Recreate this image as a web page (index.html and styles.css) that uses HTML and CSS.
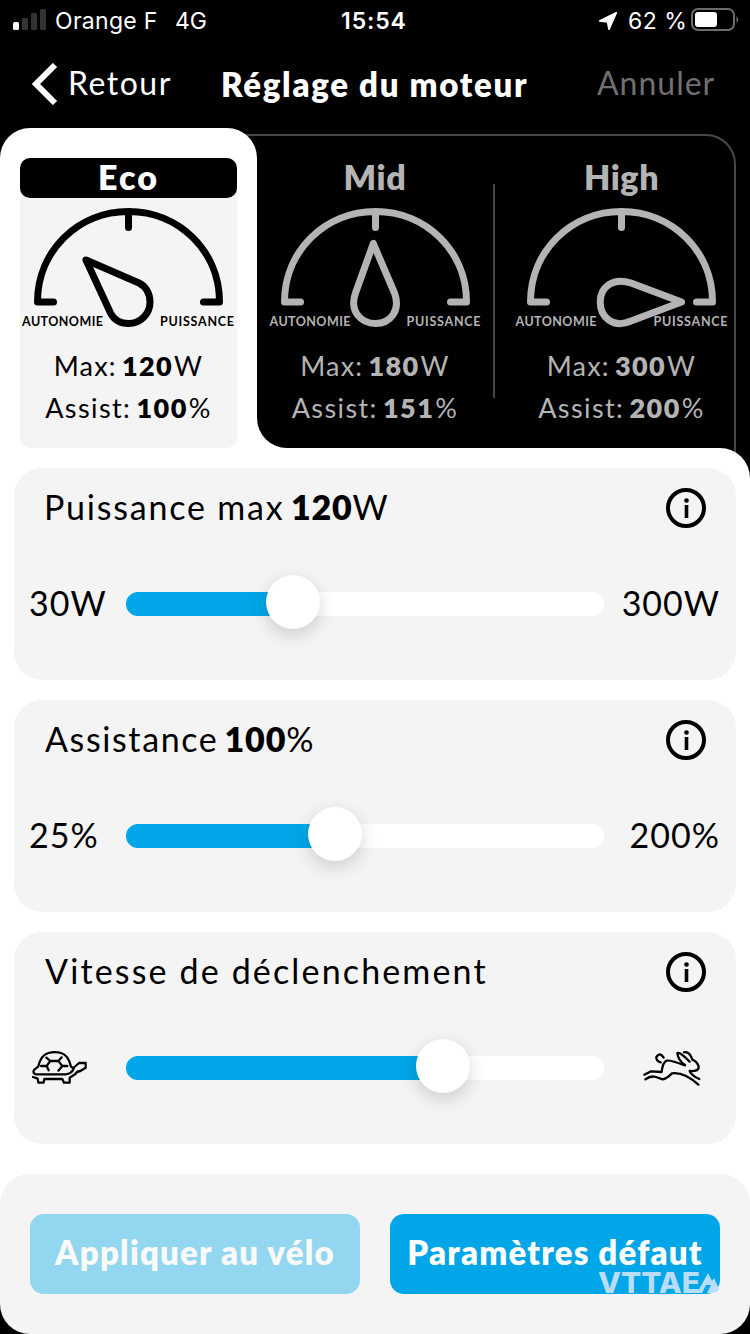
FILE: index.html
```html
<!DOCTYPE html>
<html lang="fr">
<head>
<meta charset="UTF-8">
<meta name="viewport" content="width=device-width, initial-scale=1.0">
<title>Réglage du moteur</title>
<link rel="stylesheet" href="styles.css">
</head>
<body>

<div class="status-bar">
  <svg class="signal" width="34" height="22" viewBox="0 0 34 22">
    <rect x="0" y="13" width="6" height="8" rx="1.5" fill="#fff"/>
    <rect x="9" y="9" width="6" height="12" rx="1.5" fill="#333"/>
    <rect x="18" y="4" width="6" height="17" rx="1.5" fill="#333"/>
    <rect x="27" y="0" width="6" height="21" rx="1.5" fill="#333"/>
  </svg>
  <span class="carrier">Orange F</span>
  <span class="network">4G</span>
  <span class="clock">15:54</span>
  <svg class="location" width="18" height="18" viewBox="0 0 18 18"><path d="M17.500 0.500L10 17.500L8.500 10L0.500 9Z" fill="#fff" stroke="#fff" stroke-width="1.500" stroke-linejoin="round"/></svg>
  <span class="percent">62 %</span>
  <svg class="battery" width="48" height="24" viewBox="0 0 48 24">
    <rect x="1" y="1" width="42" height="21" rx="6" fill="none" stroke="#6b6b6b" stroke-width="2"/>
    <rect x="4" y="4" width="22" height="15" rx="3" fill="#fff"/>
    <path d="M45.500 8Q49 11.500 45.500 15Z" fill="#6b6b6b"/>
  </svg>
</div>

<div class="nav">
  <svg class="chevron" width="26" height="42" viewBox="0 0 26 42"><path d="M23 2L4 21L23 40" fill="none" stroke="#fff" stroke-width="6"/></svg>
  <span class="back">Retour</span>
  <h1>Réglage du moteur</h1>
  <span class="cancel">Annuler</span>
</div>

<div class="modes">
  <div class="modes-dark"></div>
  <div class="modes-frame"></div>
  <div class="mode-tab"></div>
  <div class="mode active">
    <h2>Eco</h2>
    <svg class="gauge" width="217" height="136" viewBox="0 0 217 136">
      <path class="line" d="M33.500 104H17.500C17.500 53 58 13.500 108.500 13.500S199.500 53 199.500 104H183.500M108.500 14V29.500"/>
      <path class="line" d="M66 62L119 85C126 88.500 130 96 130 104A21.500 21.500 0 0 1 108.500 125.500C101 125.500 94 122 90.500 115Z"/>
      <text x="2" y="128" textLength="81">AUTONOMIE</text>
      <text x="140" y="128" textLength="74">PUISSANCE</text>
    </svg>
    <p class="max">Max: <b>120</b>W</p>
    <p class="assist">Assist: <b>100</b>%</p>
  </div>
  <div class="mode divided">
    <h2>Mid</h2>
    <svg class="gauge" width="217" height="136" viewBox="0 0 217 136">
      <path class="line" d="M33.500 104H17.500C17.500 53 58 13.500 108.500 13.500S199.500 53 199.500 104H183.500M108.500 14V29.500"/>
      <path class="line" d="M106.300 45.500L88.500 95C82 113 94 125.500 108.500 125.500S134 113 127.500 95Z"/>
      <text x="2.500" y="128" textLength="81">AUTONOMIE</text>
      <text x="139.500" y="128" textLength="74">PUISSANCE</text>
    </svg>
    <p class="max">Max: <b>180</b>W</p>
    <p class="assist">Assist: <b>151</b>%</p>
  </div>
  <div class="mode">
    <h2>High</h2>
    <svg class="gauge" width="217" height="136" viewBox="0 0 217 136">
      <path class="line" d="M33.500 104H17.500C17.500 53 58 13.500 108.500 13.500S199.500 53 199.500 104H183.500M108.500 14V29.500"/>
      <path class="line" d="M168.500 104L118 85C100 79 87.200 89 87.200 104S100 131 118 123Z"/>
      <text x="2.500" y="128" textLength="81">AUTONOMIE</text>
      <text x="140.500" y="128" textLength="74">PUISSANCE</text>
    </svg>
    <p class="max">Max: <b>300</b>W</p>
    <p class="assist">Assist: <b>200</b>%</p>
  </div>
</div>

<div class="sheet">
  <div class="card">
    <div class="card-head">
      <h3 class="power">Puissance max <b>120</b>W</h3>
      <svg class="info" width="40" height="40" viewBox="0 0 40 40"><circle cx="20" cy="20" r="18" fill="none" stroke="#000" stroke-width="4"/><circle cx="20.500" cy="12.500" r="2.300"/><path d="M18.700 17H22.300V30H18.700Z"/></svg>
    </div>
    <div class="slider-row">
      <span class="low">30W</span>
      <div class="track"><div class="fill" style="width: 167px"><div class="thumb"></div></div></div>
      <span class="high">300W</span>
    </div>
  </div>

  <div class="card">
    <div class="card-head">
      <h3 class="assistance">Assistance <b>100</b>%</h3>
      <svg class="info" width="40" height="40" viewBox="0 0 40 40"><circle cx="20" cy="20" r="18" fill="none" stroke="#000" stroke-width="4"/><circle cx="20.500" cy="12.500" r="2.300"/><path d="M18.700 17H22.300V30H18.700Z"/></svg>
    </div>
    <div class="slider-row">
      <span class="low">25%</span>
      <div class="track"><div class="fill" style="width: 209px"><div class="thumb"></div></div></div>
      <span class="high">200%</span>
    </div>
  </div>

  <div class="card">
    <div class="card-head">
      <h3 class="speed">Vitesse de déclenchement</h3>
      <svg class="info" width="40" height="40" viewBox="0 0 40 40"><circle cx="20" cy="20" r="18" fill="none" stroke="#000" stroke-width="4"/><circle cx="20.500" cy="12.500" r="2.300"/><path d="M18.700 17H22.300V30H18.700Z"/></svg>
    </div>
    <div class="slider-row">
      <span class="low">
        <svg class="animal turtle" width="56" height="34" viewBox="35 48 168 102">
          <path d="M54 94L41 105Q36 115 47 118H136Q154 117 160 101L152 95Q144 60 122 54Q104 49 84 54Q62 60 54 94"/>
          <path d="M159 99L176 84H196V98L180 108Q170 108 164 118L148 128V143H131L126 132H72L70 143H54L52 131L38 126"/>
          <path d="M78 68L90 78H114L124 67M89 79L79 93H62M79 93L85 106M115 79L126 93H141M126 93L114 107"/>
        </svg>
      </span>
      <div class="track"><div class="fill" style="width: 317px"><div class="thumb"></div></div></div>
      <span class="high">
        <svg class="animal rabbit" width="58" height="36" viewBox="37 45 174 108">
          <path d="M41 119L61 109L93 111Q96 82 108 77Q116 74 163 91"/>
          <path d="M163 90Q142 76 140 54Q148 50 177 80"/>
          <path d="M160 52Q176 47 185 74Q204 82 204 99Q200 110 177 108Q180 120 206 132"/>
          <path d="M44 133Q60 121 76 126L96 133Q108 131 124 115Q160 110 203 149"/>
          <path d="M90 82Q76 78 77 66Q88 50 99 68"/>
        </svg>
      </span>
    </div>
  </div>
</div>

<div class="footer-wrap">
  <div class="footer">
    <button class="btn apply" disabled><span>Appliquer au vélo</span></button>
    <button class="btn defaults"><span>Paramètres défaut</span></button>
    <svg class="watermark" width="122" height="30" viewBox="0 0 122 30">
      <text x="0" y="21" textLength="102" lengthAdjust="spacingAndGlyphs">VTTAE</text>
      <path d="M99 21L110 1L114 9L116 6L121 17Q119 21 114 21H109L113 13H108L104 21Z"/>
    </svg>
  </div>
</div>

</body>
</html>
```
FILE: styles.css
```css
* {
  box-sizing: border-box;
}

body {
  margin: 0;
  width: 750px;
  height: 1334px;
  overflow: hidden;
  background: #000;
  color: #000;
  font-family: Lato, "Liberation Sans", sans-serif;
}

h1, h2, h3, p {
  margin: 0;
  font-weight: 400;
  white-space: nowrap;
}

svg {
  display: block;
  flex: none;
}

.status-bar {
  display: flex;
  height: 40px;
  padding-left: 13px;
  color: #fff;
  font: 23px/42px Inter, "Liberation Sans", sans-serif;
  white-space: nowrap;
}

.signal {
  margin: 9px 8px 0 0;
}

.carrier {
  width: 120px;
  letter-spacing: 0.3px;
}

.network {
  width: 166px;
}

.clock {
  width: 258px;
  font-weight: 600;
  letter-spacing: 0.9px;
}

.location {
  margin: 12px 11px 0 0;
}

.percent {
  width: 63px;
  letter-spacing: 0.5px;
}

.battery {
  margin-top: 8px;
}

.nav {
  display: flex;
  height: 88px;
  padding-left: 32px;
  color: #fff;
  font-size: 32px;
  line-height: 86px;
}

.chevron {
  margin: 23px 10px 0 0;
}

.back {
  width: 153px;
  letter-spacing: 1.5px;
}

.nav h1 {
  width: 376px;
  font-size: 33px;
  font-weight: 800;
  line-height: 89px;
  letter-spacing: 1.7px;
}

.cancel {
  color: #707070;
  letter-spacing: 1px;
}

.modes {
  position: relative;
  display: grid;
  grid-template-columns: 217px 217px 217px;
  column-gap: 29.5px;
  height: 320px;
  padding: 30px 0 0 20px;
  background: linear-gradient(#000 50%, #fff 50%);
}

/* black area with the inverted corner next to the active tab */
.modes-dark {
  position: absolute;
  inset: 0 0 0 257px;
  background: #000;
  border-bottom-left-radius: 30px;
}

.modes-frame {
  position: absolute;
  top: 6px;
  left: 200px;
  width: 536px;
  height: 330px;
  border: solid #484848;
  border-width: 2px 2px 0 0;
  border-top-right-radius: 30px;
}

.mode-tab {
  position: absolute;
  inset: 0 auto 0 0;
  width: 257px;
  background: #fff;
  border-radius: 30px 30px 0 0;
}

.mode {
  position: relative;
  color: #b4b4b4;
  text-align: center;
  border-radius: 10px;
}

.mode.active {
  background: #f4f4f4;
  color: #000;
}

.mode h2 {
  height: 40px;
  border-radius: 10px;
  font-size: 34px;
  font-weight: 800;
  line-height: 38px;
  letter-spacing: 0.6px;
}

.mode.active h2 {
  background: #000;
  color: #fff;
  letter-spacing: 2px;
}

.divided::after {
  content: "";
  position: absolute;
  top: 26px;
  right: -11.5px;
  width: 2px;
  height: 214px;
  background: #484848;
}

.gauge .line {
  fill: none;
  stroke: currentColor;
  stroke-width: 7;
  stroke-linecap: round;
  stroke-linejoin: round;
}

.gauge text {
  fill: currentColor;
  font-size: 12.5px;
  font-weight: 700;
}

.max, .assist {
  height: 42px;
  font-size: 27px;
  line-height: 64px;
  letter-spacing: 1.2px;
}

.assist {
  letter-spacing: 1.4px;
}

.max b, .assist b {
  margin: 0 1px 0 -3px;
  font-weight: 800;
  letter-spacing: 1.4px;
}

.sheet {
  position: relative;
  display: flex;
  flex-direction: column;
  gap: 20px;
  height: 726px;
  padding: 20px 14px 0;
  background: #fff;
  border-top-right-radius: 30px;
}

.card {
  height: 212px;
  padding: 20px 16px 0 15px;
  background: #f4f4f4;
  border-radius: 28px;
}

.card-head {
  display: flex;
  justify-content: space-between;
  height: 40px;
  padding: 0 14px 0 16px;
}

.card h3 {
  font-size: 34px;
  line-height: 37px;
  letter-spacing: 1.6px;
}

.card h3 b {
  margin-left: -4px;
  font-weight: 800;
  letter-spacing: 0.8px;
}

.card .power {
  margin-left: -1px;
  letter-spacing: 1.8px;
}

.card .speed {
  letter-spacing: 2.15px;
}

.slider-row {
  display: flex;
  align-items: center;
  height: 40px;
  margin-top: 56px;
  font-size: 34px;
  line-height: 38px;
  letter-spacing: 1px;
}

.low {
  width: 97px;
  height: 40px;
}

.high {
  display: flex;
  flex: 1;
  justify-content: flex-end;
  height: 40px;
}

.track {
  width: 478px;
  height: 24px;
  background: #fff;
  border-radius: 12px;
}

.fill {
  position: relative;
  height: 24px;
  background: #00a6e7;
  border-radius: 12px 0 0 12px;
}

.thumb {
  position: absolute;
  top: -17px;
  right: -27px;
  width: 54px;
  height: 54px;
  background: #fff;
  border-radius: 50%;
  box-shadow: 0 6px 18px rgba(0, 0, 0, 0.16);
}

.animal {
  fill: none;
  stroke: #000;
  stroke-width: 6.8;
  stroke-linejoin: round;
  stroke-linecap: round;
}

.turtle {
  margin: 3px 0 0 3px;
}

.rabbit {
  margin: 2px 19px 0 0;
}

.footer-wrap {
  background: linear-gradient(#fff 50%, #000 50%);
}

.footer {
  position: relative;
  display: flex;
  gap: 30px;
  height: 160px;
  padding: 40px 30px;
  background: #f4f4f4;
  border-radius: 30px;
}

.btn {
  width: 330px;
  height: 80px;
  padding: 0 0 4px;
  border: none;
  border-radius: 14px;
  background: #00a6e7;
  color: #fff;
  font: 800 33px/76px Lato, "Liberation Sans", sans-serif;
  letter-spacing: 1.2px;
  white-space: nowrap;
}

.apply {
  background: #93d6f0;
  color: #fafafa;
}

.watermark {
  position: absolute;
  left: 598px;
  top: 98px;
  overflow: visible;
  fill: #b9ddf7;
}

.watermark text {
  font: 800 28px Inter, sans-serif;
}
```
